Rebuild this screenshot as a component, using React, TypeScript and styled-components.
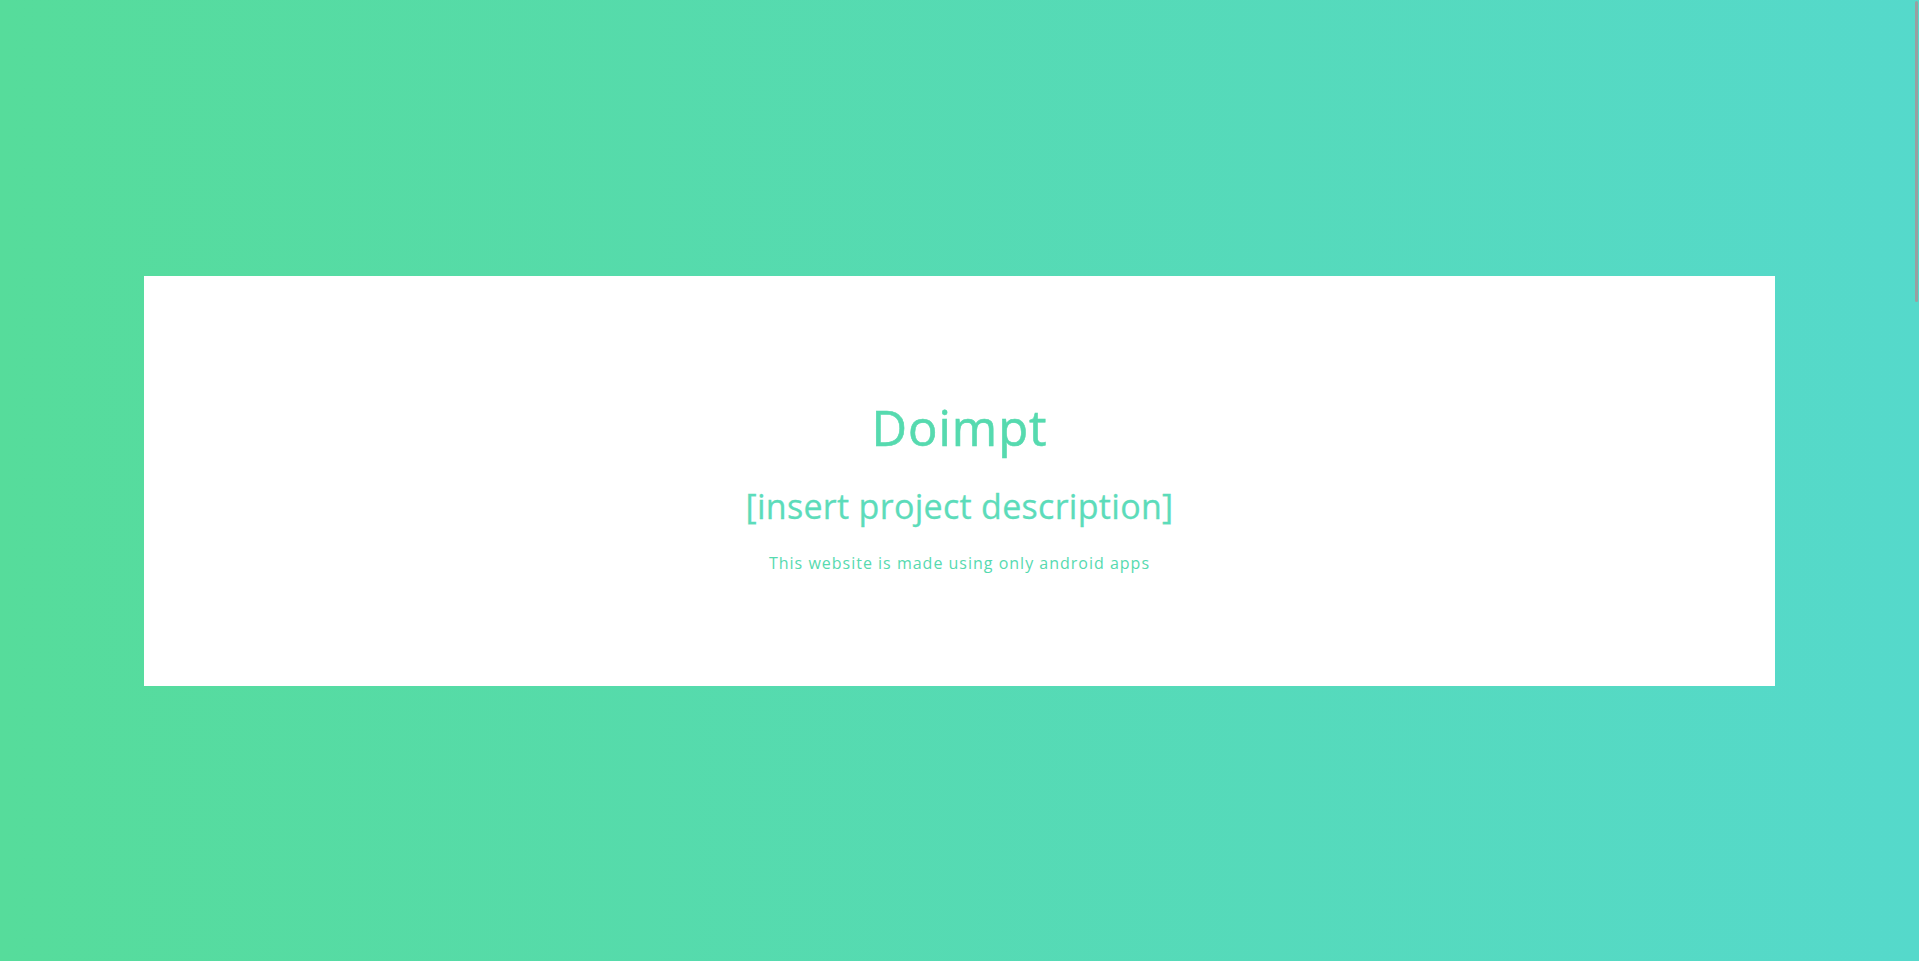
import React from "react";
import styled, { createGlobalStyle } from "styled-components";

const Global = createGlobalStyle`
  html, body { margin: 0; padding: 0; }
  body {
    font-family: "Open Sans", "Noto Sans", sans-serif;
    background: linear-gradient(to right, #56dc9b 0%, #55d9cb 100%);
  }
`;

const Hero = styled.section`
  height: 100vh;
  display: flex;
  align-items: center;
  justify-content: center;
  background: linear-gradient(to right, #56dc9b 0%, #55d9cb 100%);
`;

const Card = styled.div`
  box-sizing: border-box;
  width: 85%;
  height: 410px;
  padding-top: 13px;
  background: #ffffff;
  display: flex;
  flex-direction: column;
  align-items: center;
  justify-content: center;
  color: #56daaf;
  text-align: center;
`;

const Title = styled.h1`
  margin: 0;
  font-size: 49px;
  font-weight: 400;
  line-height: 1;
  letter-spacing: 1px;
  -webkit-text-stroke: 0.6px #56daaf;
`;

const Subtitle = styled.h2`
  margin: 37px 0 0;
  font-size: 34px;
  font-weight: 400;
  line-height: 1;
  letter-spacing: 0.3px;
  color: #5cdcba;
  -webkit-text-stroke: 0.3px #5cdcba;
`;

const Note = styled.p`
  margin: 32px 0 0;
  font-size: 16px;
  font-weight: 400;
  line-height: 1;
  letter-spacing: 1px;
`;

const ScrollThumb = styled.div`
  position: fixed;
  top: 1px;
  right: 1px;
  width: 3px;
  height: 301px;
  background: #9a9fa0;
  border-radius: 2px;
`;

export default function App() {
  return (
    <>
      <Global />
      <Hero>
        <Card>
          <Title>Doimpt</Title>
          <Subtitle>[insert project description]</Subtitle>
          <Note>This website is made using only android apps</Note>
        </Card>
      </Hero>
      <ScrollThumb />
    </>
  );
}
